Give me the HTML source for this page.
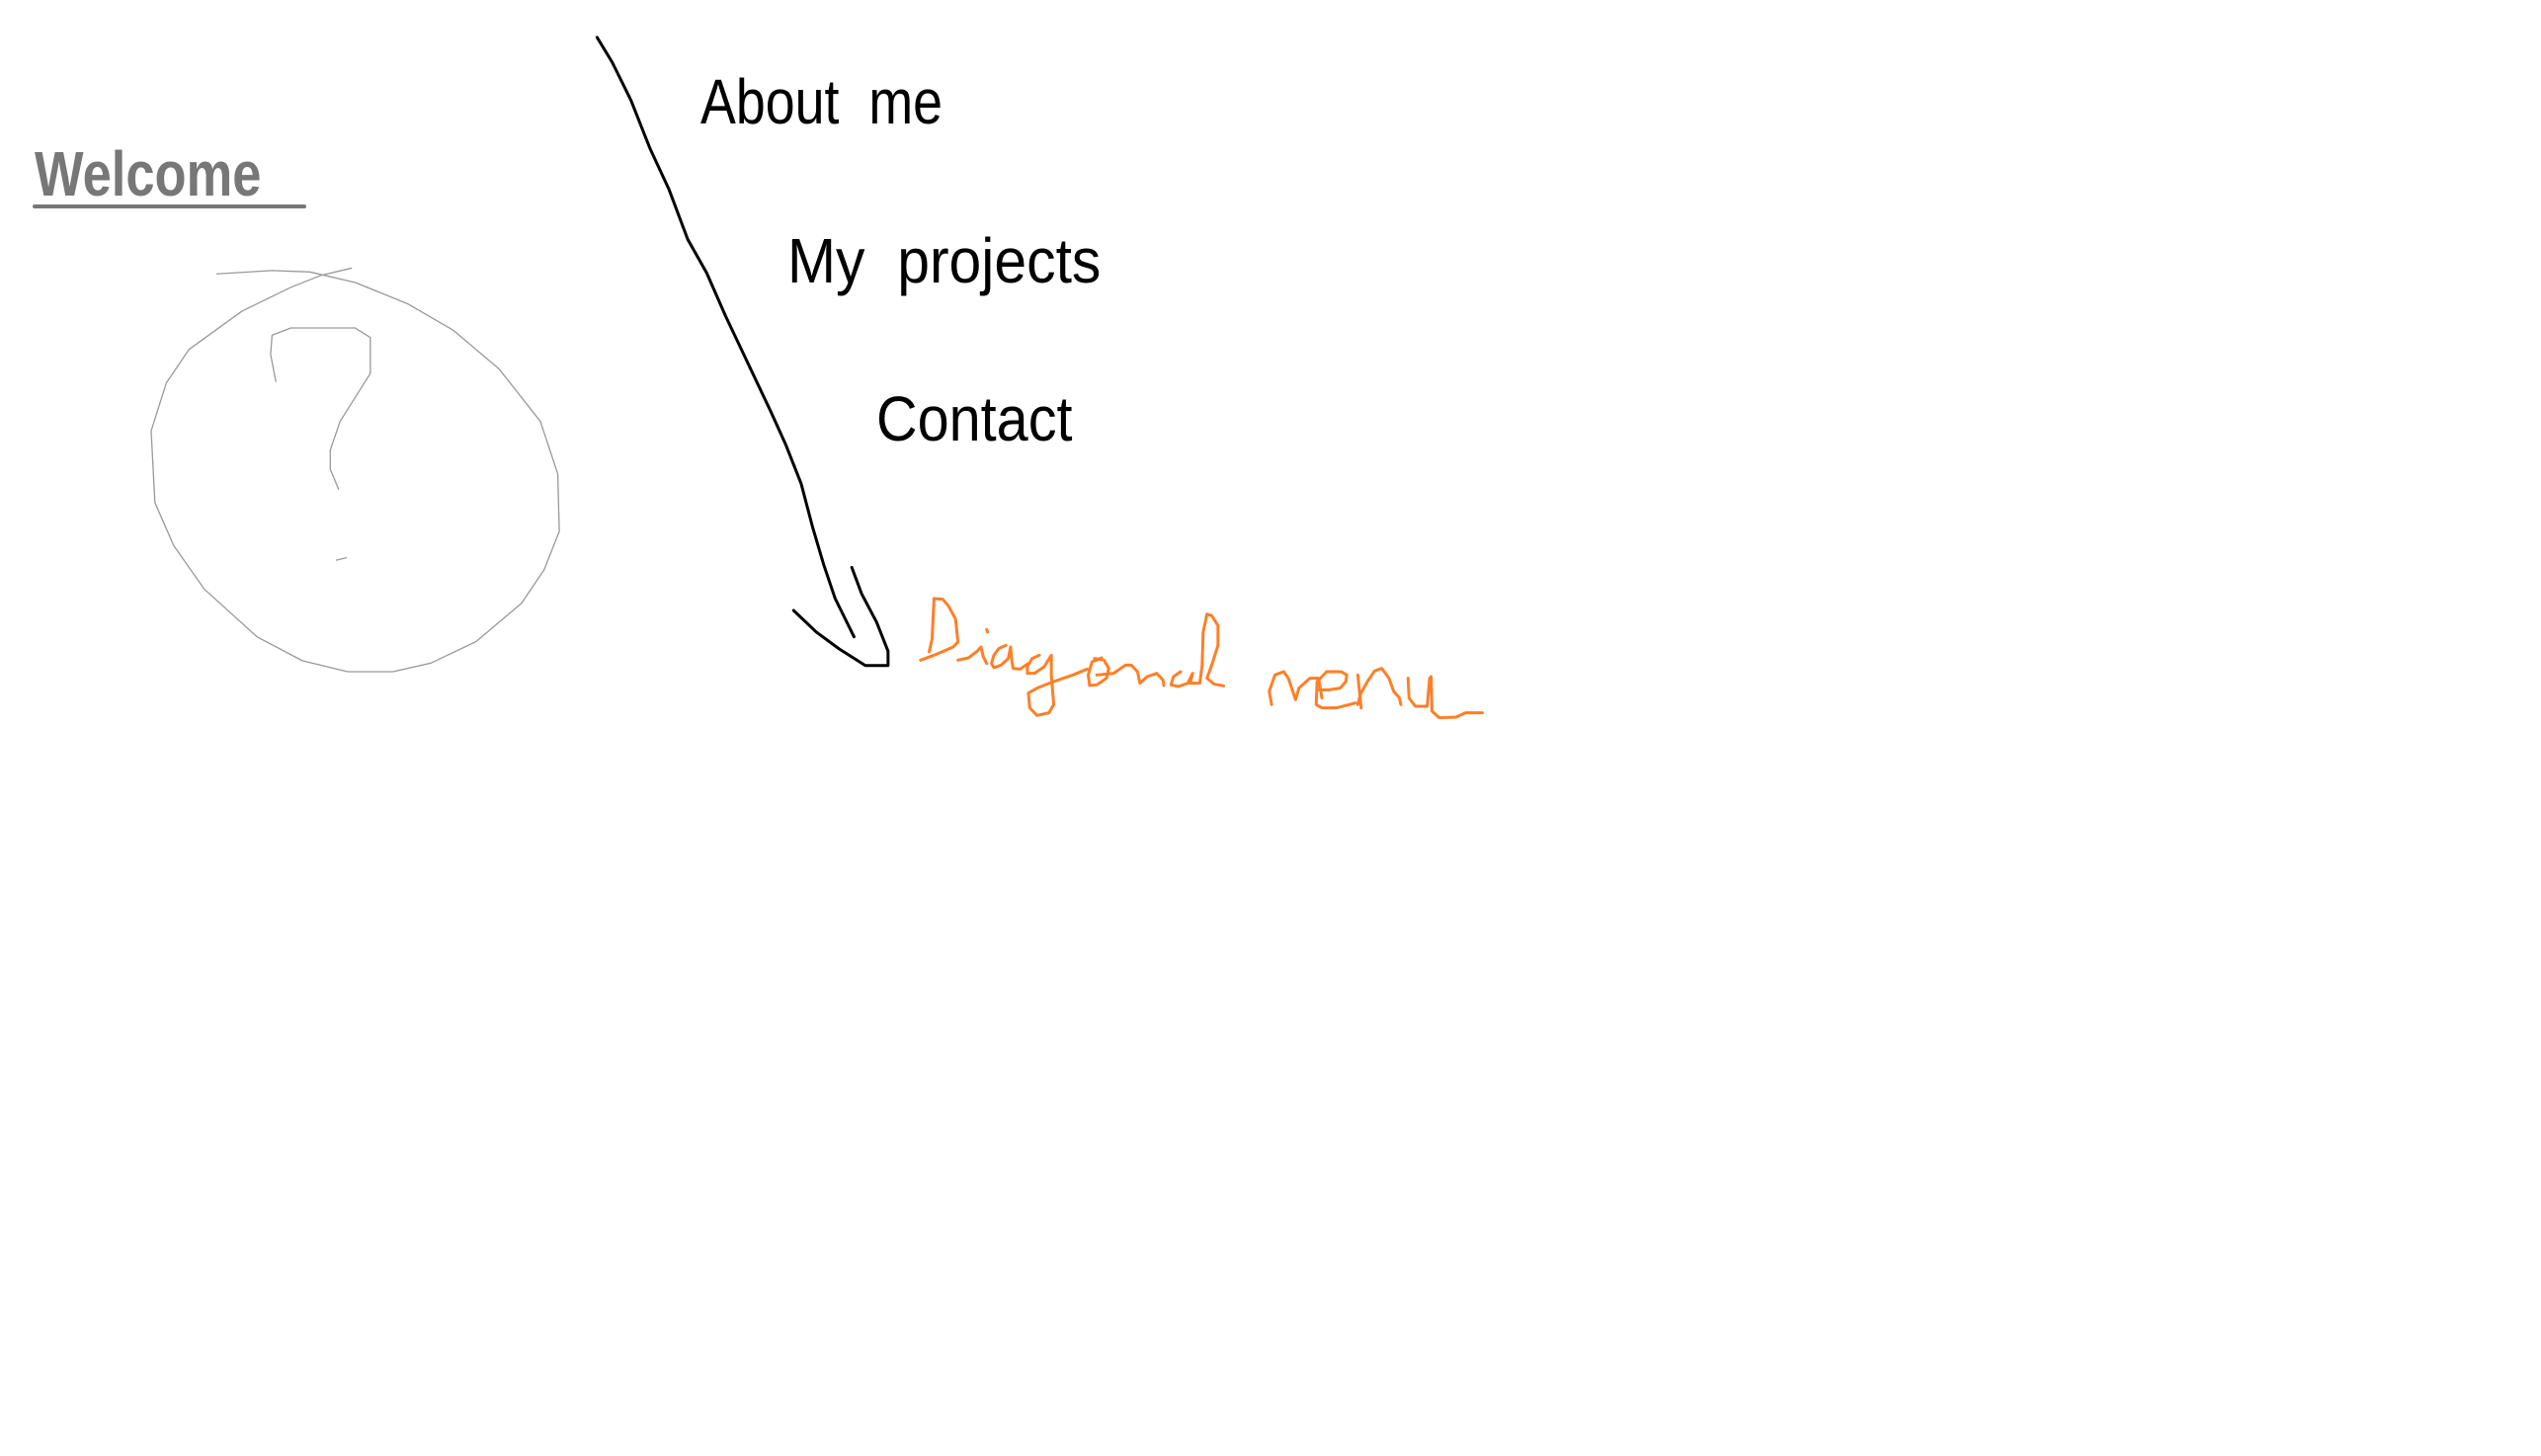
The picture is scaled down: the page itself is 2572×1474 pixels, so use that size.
<!DOCTYPE html>
<html><head><meta charset="utf-8"><style>
html,body{margin:0;padding:0;background:#fff;width:2572px;height:1474px;overflow:hidden;position:relative}
.t{position:absolute;font-family:"Liberation Sans",sans-serif;font-size:64px;line-height:1;white-space:pre;transform-origin:0 0}
</style></head><body>
<div class="t" style="left:35px;top:144px;color:#777;font-weight:bold;transform:scaleX(0.82)">Welcome</div>
<div style="position:absolute;left:33px;top:207px;width:277px;height:4px;background:#777;border-radius:2px"></div>
<div class="t" style="left:709px;top:71px;color:#000;transform:scaleX(0.84)">About  me</div>
<div class="t" style="left:797px;top:232px;color:#000;transform:scaleX(0.92)">My  projects</div>
<div class="t" style="left:887px;top:392px;color:#000;transform:scaleX(0.9)">Contact</div>
<svg style="position:absolute;left:0;top:0" width="2572" height="1474">
<g transform="scale(0.765,0.4847)" fill="none" stroke-linecap="round" stroke-linejoin="round">
<path stroke="#000" stroke-width="3" vector-effect="non-scaling-stroke" d="M790,78 L810,130 835,210 860,310 885,395 910,500 935,570 960,660 990,760 1020,860 1040,930 1060,1010 1075,1100 1090,1180 1105,1250 1130,1330"/>
<path stroke="#000" stroke-width="3" vector-effect="non-scaling-stroke" d="M1050,1275 L1080,1320 1110,1355 1145,1390 1175,1390 1175,1360 1160,1300 1140,1240 1127,1185"/>
<path stroke="#999" stroke-width="1.3" vector-effect="non-scaling-stroke" d="M287,572 L360,565 410,568 470,590 540,635 600,690 660,770 715,880 738,990 740,1110 720,1190 690,1260 630,1340 570,1385 520,1403 460,1403 400,1380 340,1330 270,1230 230,1140 205,1050 200,900 220,800 250,730 320,650 385,600 425,575 465,560"/>
<path stroke="#999" stroke-width="1.3" vector-effect="non-scaling-stroke" d="M365,797 L358,740 360,700 385,685 470,685 490,705 490,780 470,830 450,880 437,940 437,980 448,1022"/>
<path stroke="#999" stroke-width="1.3" vector-effect="non-scaling-stroke" d="M445,1170 L458,1165"/>
</g>
<g transform="translate(800,540) scale(0.4847,0.3333)" fill="none" stroke="#ff7f27" stroke-linecap="round" stroke-linejoin="round">
<path vector-effect="non-scaling-stroke" stroke-width="3" d="M300,198 L296,320 290,360"/>
<path vector-effect="non-scaling-stroke" stroke-width="3" d="M300,198 L318,200 330,220 345,260 350,330 340,345 300,370 272,385"/>
<path vector-effect="non-scaling-stroke" stroke-width="3" d="M350,385 L372,378 390,358 398,345 403,375 410,395"/>
<path vector-effect="non-scaling-stroke" stroke-width="3" d="M410,292 L412,300"/>
<path vector-effect="non-scaling-stroke" stroke-width="3" d="M450,340 L435,350 425,370 420,395 425,408 440,400 455,380 460,345 462,380 465,410 480,412 497,395"/>
<path vector-effect="non-scaling-stroke" stroke-width="3" d="M520,370 L505,380 495,405 495,425 510,425 530,405 545,370 545,430 550,520 540,545 515,553 500,530 497,485 515,470 550,450 590,430 620,412"/>
<path vector-effect="non-scaling-stroke" stroke-width="3" d="M650,378 L630,390 622,430 625,462 640,460 660,440 665,410 655,385 635,380"/>
<path vector-effect="non-scaling-stroke" stroke-width="3" d="M640,430 L675,425 700,400 712,400 725,420 730,455 745,435 765,425 778,445 780,462"/>
<path vector-effect="non-scaling-stroke" stroke-width="3" d="M815,420 L800,435 795,460 810,465 830,455 840,425 835,455 855,455 860,400 862,300 870,245 880,250 893,280 893,340 880,400 870,440 885,458 905,463"/>
<path vector-effect="non-scaling-stroke" stroke-width="3" d="M1005,520 L1000,480 1012,430 1030,420 1040,440 1055,505 1062,470 1085,440 1103,440 1110,500"/>
<path vector-effect="non-scaling-stroke" stroke-width="3" d="M1105,475 L1125,475 1148,470 1160,450 1162,430 1150,420 1120,420 1100,450 1098,520 1110,530 1140,530 1180,515"/>
<path vector-effect="non-scaling-stroke" stroke-width="3" d="M1192,530 L1185,430"/>
<path vector-effect="non-scaling-stroke" stroke-width="3" d="M1185,520 L1190,490 1205,450 1220,418 1235,410 1250,440 1260,480 1272,500 1275,520"/>
<path vector-effect="non-scaling-stroke" stroke-width="3" d="M1290,440 L1292,500 1305,525 1330,525 1335,440"/>
<path vector-effect="non-scaling-stroke" stroke-width="3" d="M1338,435 L1340,540 1355,560 1390,558 1410,545 1445,545"/>
</g>
</svg>
</body></html>
